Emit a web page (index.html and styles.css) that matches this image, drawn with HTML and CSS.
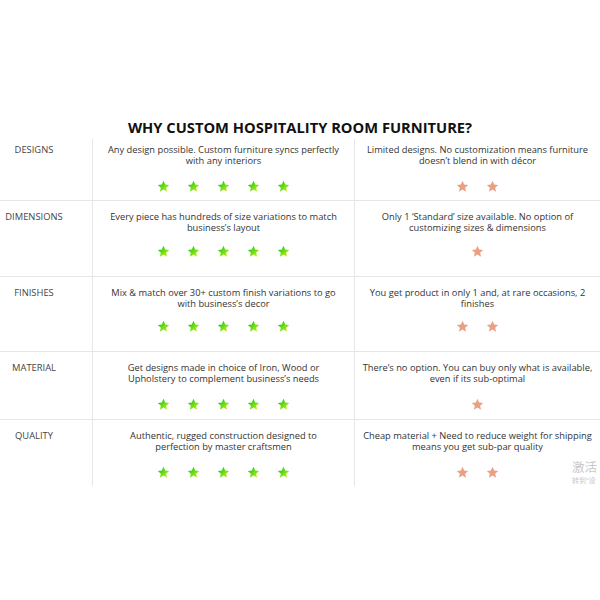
FILE: index.html
```html
<!DOCTYPE html>
<html>
<head>
<meta charset="utf-8">
<link rel="stylesheet" href="styles.css">
</head>
<body>
<svg class="defs" width="0" height="0">
  <defs>
    <linearGradient id="g" x1="0" y1="0" x2="1" y2="1">
      <stop offset="0.15" stop-color="#12cc12"/>
      <stop offset="1" stop-color="#e8f01a"/>
    </linearGradient>
    <symbol id="star" viewBox="0 0 24 24">
      <path d="M12 1.5l3.1 6.9 7.4.7-5.6 5 1.7 7.4L12 17.6l-6.6 3.9 1.7-7.4-5.6-5 7.4-.7z"/>
    </symbol>
  </defs>
</svg>
<div class="page">
  <h1 class="title">WHY CUSTOM HOSPITALITY ROOM FURNITURE?</h1>
  <div class="table">
    <div class="row r1">
      <div class="label">DESIGNS</div>
      <div class="cell">
        <p>Any design possible. Custom furniture syncs perfectly<br>with any interiors</p>
        <div class="stars good"><svg><use href="#star"/></svg><svg><use href="#star"/></svg><svg><use href="#star"/></svg><svg><use href="#star"/></svg><svg><use href="#star"/></svg></div>
      </div>
      <div class="cell">
        <p>Limited designs. No customization means furniture<br>doesn’t blend in with décor</p>
        <div class="stars bad"><svg><use href="#star"/></svg><svg><use href="#star"/></svg></div>
      </div>
    </div>
    <div class="row r2">
      <div class="label">DIMENSIONS</div>
      <div class="cell">
        <p>Every piece has hundreds of size variations to match<br>business’s layout</p>
        <div class="stars good"><svg><use href="#star"/></svg><svg><use href="#star"/></svg><svg><use href="#star"/></svg><svg><use href="#star"/></svg><svg><use href="#star"/></svg></div>
      </div>
      <div class="cell">
        <p>Only 1 ‘Standard’ size available. No option of<br>customizing sizes &amp; dimensions</p>
        <div class="stars bad"><svg><use href="#star"/></svg></div>
      </div>
    </div>
    <div class="row r3">
      <div class="label">FINISHES</div>
      <div class="cell">
        <p>Mix &amp; match over 30+ custom finish variations to go<br>with business’s decor</p>
        <div class="stars good"><svg><use href="#star"/></svg><svg><use href="#star"/></svg><svg><use href="#star"/></svg><svg><use href="#star"/></svg><svg><use href="#star"/></svg></div>
      </div>
      <div class="cell">
        <p>You get product in only 1 and, at rare occasions, 2<br>finishes</p>
        <div class="stars bad"><svg><use href="#star"/></svg><svg><use href="#star"/></svg></div>
      </div>
    </div>
    <div class="row r4">
      <div class="label">MATERIAL</div>
      <div class="cell">
        <p>Get designs made in choice of Iron, Wood or<br>Upholstery to complement business’s needs</p>
        <div class="stars good"><svg><use href="#star"/></svg><svg><use href="#star"/></svg><svg><use href="#star"/></svg><svg><use href="#star"/></svg><svg><use href="#star"/></svg></div>
      </div>
      <div class="cell">
        <p>There’s no option. You can buy only what is available,<br>even if its sub-optimal</p>
        <div class="stars bad"><svg><use href="#star"/></svg></div>
      </div>
    </div>
    <div class="row r5">
      <div class="label">QUALITY</div>
      <div class="cell">
        <p>Authentic, rugged construction designed to<br>perfection by master craftsmen</p>
        <div class="stars good"><svg><use href="#star"/></svg><svg><use href="#star"/></svg><svg><use href="#star"/></svg><svg><use href="#star"/></svg><svg><use href="#star"/></svg></div>
      </div>
      <div class="cell">
        <p>Cheap material + Need to reduce weight for shipping<br>means you get sub-par quality</p>
        <div class="stars bad"><svg><use href="#star"/></svg><svg><use href="#star"/></svg></div>
      </div>
    </div>
  </div>
  <div class="watermark">
    <span class="wm1">激活</span>
    <span class="wm2">转到“设</span>
  </div>
</div>
</body>
</html>
```
FILE: styles.css
```css
* { box-sizing: border-box; }
html, body { margin: 0; padding: 0; background: #fff; }
body { width: 600px; height: 600px; overflow: hidden; font-family: "Open Sans", "Noto Sans CJK SC", sans-serif; color: #333; }
.defs { position: absolute; }
.page { position: relative; padding-top: 117px; }
.title { margin: 0; height: 22px; text-align: center; font-size: 14.7px; line-height: 20px; font-weight: 700; color: #111; }
.table { display: flex; flex-direction: column; }
.row { display: grid; grid-template-columns: 92px 262px 1fr; border-bottom: 1px solid #e6e6e6; }
.r1 { height: 62px; }
.r2 { height: 76px; }
.r3 { height: 75px; }
.r4 { height: 68px; }
.r5 { height: 66px; border-bottom: none; }
.label { width: 68px; text-align: center; font-size: 9.4px; line-height: 11px; color: #444; padding-top: 10px; }
.r1 .label, .r1 .cell { padding-top: 5px; }
.cell { border-left: 1px solid #e6e6e6; padding-top: 10px; text-align: center; }
.cell p { margin: 0; font-size: 9.3px; line-height: 11px; color: #333; }
.stars { display: flex; justify-content: center; gap: 17px; height: 13px; }
.stars svg { width: 13px; height: 13px; }
.good svg { fill: url(#g); }
.bad svg { fill: #e9a184; }
.r1 .stars { margin-top: 14px; }
.r2 .stars { margin-top: 12px; }
.r3 .stars { margin-top: 11px; }
.r4 .stars { margin-top: 14px; }
.r5 .stars { margin-top: 14px; }
.watermark { position: absolute; left: 572px; top: 460px; display: flex; flex-direction: column; color: #c8c8c8; white-space: nowrap; }
.wm1 { font-size: 12.5px; line-height: 16px; }
.wm2 { font-size: 7px; line-height: 10px; }
```
